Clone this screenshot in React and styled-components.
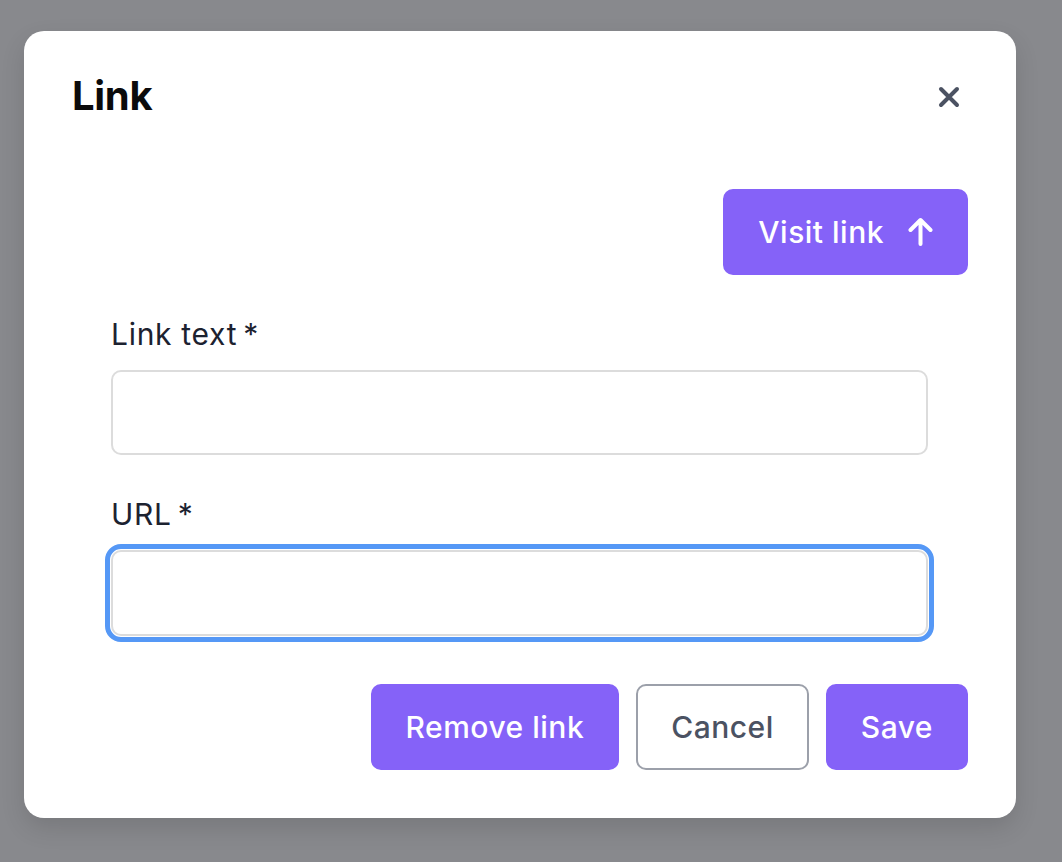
import styled, { createGlobalStyle } from 'styled-components';

const GlobalStyle = createGlobalStyle`
  html, body {
    margin: 0;
    padding: 0;
    height: 100%;
    background: #88898d;
    font-family: 'Inter', 'Noto Sans', sans-serif;
  }
  #root {
    min-height: 100%;
  }
`;

const Backdrop = styled.div`
  min-height: 862px;
  padding: 31px 46px 0 24px;
  box-sizing: border-box;
`;

const Modal = styled.div`
  width: 992px;
  height: 787px;
  box-sizing: border-box;
  background: #ffffff;
  border-radius: 20px;
  box-shadow: 0 10px 24px rgba(0, 0, 0, 0.12);
  padding: 41px 48px 48px 48px;
  display: flex;
  flex-direction: column;
`;

const Header = styled.div`
  display: flex;
  justify-content: space-between;
  align-items: center;
`;

const Title = styled.h2`
  margin: 0;
  font-size: 40px;
  line-height: 48px;
  font-weight: 700;
  color: #0b0b0c;
  letter-spacing: -0.3px;
`;

const CloseButton = styled.button`
  border: none;
  background: none;
  padding: 0;
  margin: 2px 8px 0 0;
  width: 22px;
  height: 22px;
  display: flex;
  align-items: center;
  justify-content: center;
  color: #4b5262;
  cursor: pointer;
`;

const TopRow = styled.div`
  display: flex;
  justify-content: flex-end;
  margin-top: 69px;
`;

const Button = styled.button`
  height: 86px;
  box-sizing: border-box;
  border-radius: 10px;
  padding: 0 33px;
  font-family: 'Inter', 'Noto Sans', sans-serif;
  font-size: 30px;
  font-weight: 500;
  letter-spacing: 0.5px;
  display: inline-flex;
  align-items: center;
  gap: 24px;
  cursor: pointer;
  border: 2px solid ${(p) => (p.$outline ? '#9ca0aa' : '#8562f8')};
  background: ${(p) => (p.$outline ? '#ffffff' : '#8562f8')};
  color: ${(p) => (p.$outline ? '#4b5262' : '#ffffff')};
`;

const Form = styled.div`
  display: flex;
  flex-direction: column;
  padding: 0 40px 0 39px;
  margin-top: 41px;
`;

const Field = styled.div`
  display: flex;
  flex-direction: column;
  gap: 18px;
  margin-bottom: 41px;
`;

const Label = styled.label`
  font-size: 30px;
  line-height: 36px;
  letter-spacing: 0.7px;
  color: #1c2230;
  font-weight: 400;
`;

const Required = styled.span`
  margin-left: 6px;
`;

const Input = styled.input`
  height: ${(p) => (p.$focused ? '86px' : '85px')};
  box-sizing: border-box;
  border: 2px solid #dcdcdc;
  border-radius: 10px;
  background: #fff;
  font-size: 28px;
  padding: 0 20px;
  outline: ${(p) => (p.$focused ? '5px solid #5598f6' : 'none')};
  outline-offset: 1px;
`;

const Actions = styled.div`
  display: flex;
  justify-content: flex-end;
  gap: 17px;
  margin-top: auto;
`;

const XIcon = () => (
  <svg width="22" height="22" viewBox="0 0 22 22" fill="none" stroke="currentColor" strokeWidth="4" strokeLinecap="round">
    <path d="M3 3 L19 19 M19 3 L3 19" />
  </svg>
);

const ArrowUp = () => (
  <svg width="25" height="30" viewBox="0 0 25 30" fill="none" stroke="currentColor" strokeWidth="4" strokeLinecap="round" strokeLinejoin="round">
    <path d="M12.5 27 V3 M2.5 13 L12.5 3 L22.5 13" />
  </svg>
);

export default function App() {
  return (
    <>
      <GlobalStyle />
      <Backdrop>
        <Modal>
          <Header>
            <Title>Link</Title>
            <CloseButton aria-label="Close">
              <XIcon />
            </CloseButton>
          </Header>
          <TopRow>
            <Button>
              Visit link
              <ArrowUp />
            </Button>
          </TopRow>
          <Form>
            <Field>
              <Label>
                Link text<Required>*</Required>
              </Label>
              <Input />
            </Field>
            <Field>
              <Label>
                URL<Required>*</Required>
              </Label>
              <Input $focused />
            </Field>
          </Form>
          <Actions>
            <Button>Remove link</Button>
            <Button $outline>Cancel</Button>
            <Button>Save</Button>
          </Actions>
        </Modal>
      </Backdrop>
    </>
  );
}
